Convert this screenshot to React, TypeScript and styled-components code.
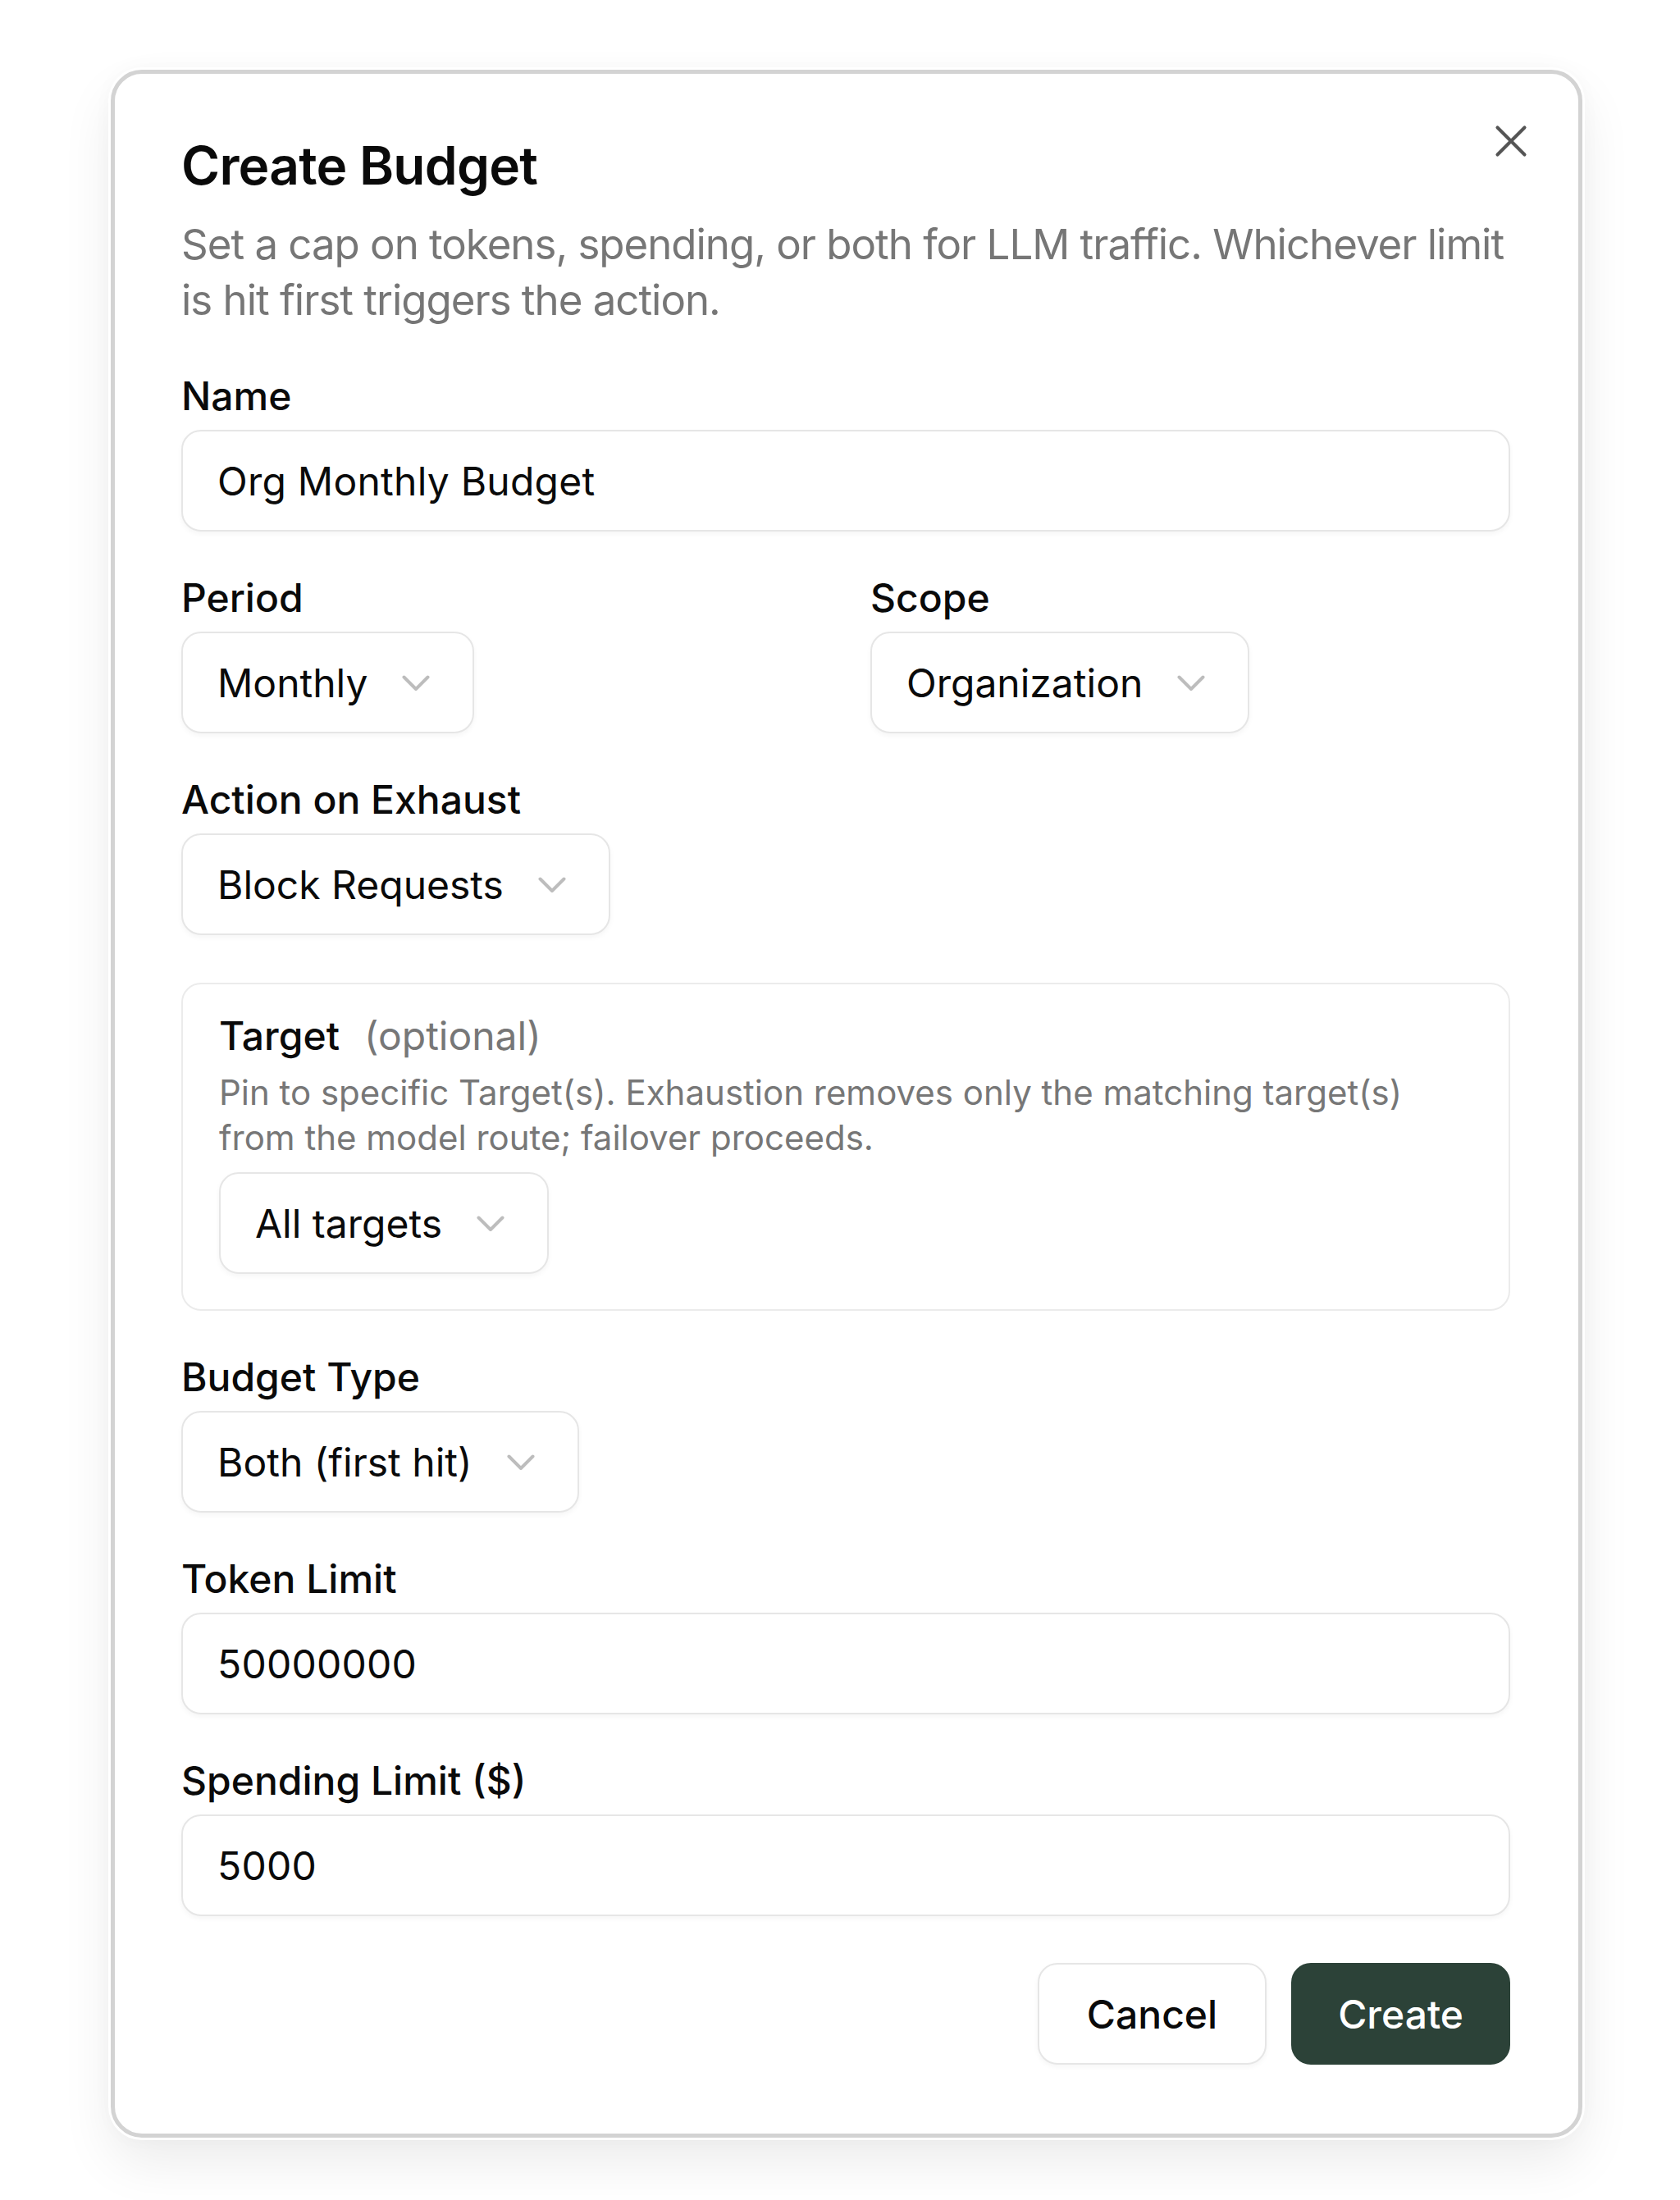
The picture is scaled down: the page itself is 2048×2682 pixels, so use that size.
import styled, { createGlobalStyle } from "styled-components";
import { X } from "lucide-react";

const GlobalStyle = createGlobalStyle`
  html, body {
    margin: 0;
    padding: 0;
    background: #ffffff;
  }
  body {
    font-family: Inter, "Noto Sans", "Liberation Sans", sans-serif;
    color: #0a0a0a;
    -webkit-font-smoothing: antialiased;
  }
  * {
    box-sizing: border-box;
  }
`;

const Page = styled.div`
  min-height: 2682px;
  padding: 85px 0 0 135px;
`;

const Dialog = styled.section`
  position: relative;
  width: 1794px;
  display: flex;
  flex-direction: column;
  gap: 52px;
  padding: 73px 83px 84px 81px;
  background: #ffffff;
  border: 5px solid #d3d3d3;
  border-radius: 38px;
  box-shadow: 0 0 0 3px #ffffff, 0 30px 64px rgba(0, 0, 0, 0.08), 0 0 26px rgba(0, 0, 0, 0.03);
`;

const CloseButton = styled.button`
  position: absolute;
  top: 49px;
  right: 49px;
  width: 66px;
  height: 66px;
  padding: 0;
  border: none;
  background: transparent;
  color: #555555;
  display: flex;
  cursor: pointer;
`;

const Header = styled.header`
  display: flex;
  flex-direction: column;
  gap: 24px;
  margin-bottom: 2px;
`;

const Title = styled.h2`
  margin: 0;
  font-size: 64px;
  line-height: 77px;
  font-weight: 600;
  letter-spacing: -0.012em;
  color: #0a0a0a;
`;

const Description = styled.p`
  margin: 0;
  font-size: 51px;
  line-height: 68px;
  letter-spacing: -0.02em;
  color: #767676;
`;

const Field = styled.div`
  display: flex;
  flex-direction: column;
  align-items: flex-start;
  gap: 12px;
`;

const Label = styled.label`
  font-size: 48px;
  line-height: 58px;
  font-weight: 500;
  color: #0a0a0a;
`;

const TextInput = styled.input`
  width: 100%;
  height: 124px;
  padding: 0 42px;
  border: 2px solid #e6e6e6;
  border-radius: 24px;
  background: #ffffff;
  font-family: inherit;
  font-size: 48px;
  letter-spacing: 0.005em;
  color: #0a0a0a;
  box-shadow: 0 3px 6px rgba(0, 0, 0, 0.04);
  outline: none;
`;

const SelectTrigger = styled.button`
  display: inline-flex;
  align-items: center;
  gap: 42px;
  height: 124px;
  padding: 0 52px 0 42px;
  border: 2px solid #e6e6e6;
  border-radius: 24px;
  background: #ffffff;
  font-family: inherit;
  font-size: 48px;
  color: #0a0a0a;
  box-shadow: 0 3px 6px rgba(0, 0, 0, 0.04);
  cursor: pointer;
`;

const Row = styled.div`
  display: grid;
  grid-template-columns: 1fr 1fr;
  gap: 60px;
`;

const TargetBox = styled.div`
  margin-top: 6px;
  padding: 34px 44px 43px 44px;
  border: 2px solid #ebebeb;
  border-radius: 24px;
  display: flex;
  flex-direction: column;
  align-items: flex-start;
`;

const TargetHead = styled.div`
  display: flex;
  align-items: baseline;
  gap: 30px;
  font-size: 48px;
  line-height: 58px;
`;

const TargetName = styled.span`
  font-weight: 500;
  color: #0a0a0a;
`;

const Optional = styled.span`
  font-weight: 400;
  color: #777777;
`;

const Hint = styled.p`
  max-width: 1490px;
  margin: 12px 0 15px;
  font-size: 42px;
  line-height: 55px;
  color: #777777;
`;

const Footer = styled.div`
  display: flex;
  justify-content: flex-end;
  gap: 30px;
  margin-top: 5px;
`;

const Button = styled.button<{ $primary?: boolean }>`
  height: 124px;
  padding: ${(p) => (p.$primary ? "0 55px" : "0 58px")};
  border-radius: 24px;
  border: 2px solid ${(p) => (p.$primary ? "#2c4238" : "#e6e6e6")};
  background: ${(p) => (p.$primary ? "#2c4238" : "#ffffff")};
  color: ${(p) => (p.$primary ? "#ffffff" : "#0a0a0a")};
  font-family: inherit;
  font-size: 48px;
  font-weight: 500;
  box-shadow: ${(p) => (p.$primary ? "none" : "0 3px 6px rgba(0, 0, 0, 0.04)")};
  cursor: pointer;
`;

function Chevron() {
  return (
    <svg width="34" height="19" viewBox="0 0 34 19" fill="none">
      <polyline
        points="2.5,2.5 17,17 31.5,2.5"
        stroke="#bdbdbd"
        strokeWidth="4"
        strokeLinecap="round"
        strokeLinejoin="round"
      />
    </svg>
  );
}

function Select({ value }: { value: string }) {
  return (
    <SelectTrigger type="button">
      <span>{value}</span>
      <Chevron />
    </SelectTrigger>
  );
}

export default function App() {
  return (
    <>
      <GlobalStyle />
      <Page>
        <Dialog>
          <CloseButton type="button" aria-label="Close">
            <X size={66} strokeWidth={1.5} />
          </CloseButton>

          <Header>
            <Title>Create Budget</Title>
            <Description>
              Set a cap on tokens, spending, or both for LLM traffic. Whichever limit is hit first
              triggers the action.
            </Description>
          </Header>

          <Field>
            <Label>Name</Label>
            <TextInput defaultValue="Org Monthly Budget" />
          </Field>

          <Row>
            <Field>
              <Label>Period</Label>
              <Select value="Monthly" />
            </Field>
            <Field>
              <Label>Scope</Label>
              <Select value="Organization" />
            </Field>
          </Row>

          <Field>
            <Label>Action on Exhaust</Label>
            <Select value="Block Requests" />
          </Field>

          <TargetBox>
            <TargetHead>
              <TargetName>Target</TargetName>
              <Optional>(optional)</Optional>
            </TargetHead>
            <Hint>
              Pin to specific Target(s). Exhaustion removes only the matching target(s) from the
              model route; failover proceeds.
            </Hint>
            <Select value="All targets" />
          </TargetBox>

          <Field>
            <Label>Budget Type</Label>
            <Select value="Both (first hit)" />
          </Field>

          <Field>
            <Label>Token Limit</Label>
            <TextInput defaultValue="50000000" />
          </Field>

          <Field>
            <Label>Spending Limit ($)</Label>
            <TextInput defaultValue="5000" />
          </Field>

          <Footer>
            <Button type="button">Cancel</Button>
            <Button type="button" $primary>
              Create
            </Button>
          </Footer>
        </Dialog>
      </Page>
    </>
  );
}
